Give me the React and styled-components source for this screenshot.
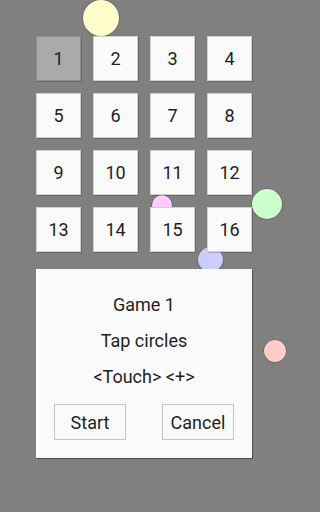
import React from 'react';
import styled, { createGlobalStyle } from 'styled-components';

const GlobalStyle = createGlobalStyle`
  html, body {
    margin: 0;
    padding: 0;
    background: #808080;
  }
  #root {
    height: 512px;
  }
`;

const Screen = styled.div`
  position: relative;
  width: 288px;
  height: 512px;
  overflow: hidden;
  background: #808080;
  font-family: Roboto, "Liberation Sans", sans-serif;
  color: #1f1f1f;
`;

const Circle = styled.div`
  position: absolute;
  left: ${p => p.x - p.r}px;
  top: ${p => p.y - p.r}px;
  width: ${p => p.r * 2}px;
  height: ${p => p.r * 2}px;
  border-radius: 50%;
  background: ${p => p.color};
  box-shadow: 0 0 0 0.6px rgba(60, 60, 40, 0.55);
  z-index: 0;
`;

const Content = styled.div`
  position: relative;
  z-index: 1;
  display: flex;
  flex-direction: column;
  align-items: center;
  padding-top: 36px;
  gap: 17px;
`;

const Grid = styled.div`
  display: grid;
  grid-template-columns: repeat(4, 45px);
  grid-auto-rows: 45px;
  gap: 12px;
`;

const Tile = styled.div`
  box-sizing: border-box;
  display: flex;
  align-items: center;
  justify-content: center;
  font-size: 18px;
  background: ${p => (p.selected ? '#aaaaaa' : '#fafafa')};
  border: 1px solid ${p => (p.selected ? '#8e8e8e' : '#cfcfcf')};
  box-shadow: 1px 1px 0 rgba(0, 0, 0, 0.18);
`;

const Dialog = styled.div`
  box-sizing: border-box;
  width: 216px;
  height: 189px;
  padding: 18px 18px;
  background: #fafafa;
  box-shadow: 1px 1px 0 #4a4a4a;
  display: flex;
  flex-direction: column;
`;

const Line = styled.div`
  height: 36px;
  line-height: 36px;
  text-align: center;
  font-size: 18px;
`;

const ButtonRow = styled.div`
  margin-top: 9px;
  display: flex;
  justify-content: space-between;
`;

const Button = styled.div`
  box-sizing: border-box;
  width: 72px;
  height: 36px;
  display: flex;
  align-items: center;
  justify-content: center;
  border: 1px solid #c4c4c4;
  font-size: 18px;
`;

const circles = [
  { x: 100.5, y: 17.5, r: 18, color: '#ffffcc' },
  { x: 161.5, y: 205, r: 10, color: '#ffccff' },
  { x: 266.5, y: 203.5, r: 15, color: '#ccffcc' },
  { x: 210.5, y: 259, r: 12.5, color: '#ccccff' },
  { x: 275, y: 351, r: 11, color: '#ffcccc' },
];

export default function App() {
  const tiles = Array.from({ length: 16 }, (_, i) => i + 1);
  return (
    <>
      <GlobalStyle />
      <Screen>
        {circles.map((c, i) => (
          <Circle key={i} {...c} />
        ))}
        <Content>
          <Grid>
            {tiles.map(n => (
              <Tile key={n} selected={n === 1}>{n}</Tile>
            ))}
          </Grid>
          <Dialog>
            <Line>Game 1</Line>
            <Line>Tap circles</Line>
            <Line>&lt;Touch&gt; &lt;+&gt;</Line>
            <ButtonRow>
              <Button>Start</Button>
              <Button>Cancel</Button>
            </ButtonRow>
          </Dialog>
        </Content>
      </Screen>
    </>
  );
}
